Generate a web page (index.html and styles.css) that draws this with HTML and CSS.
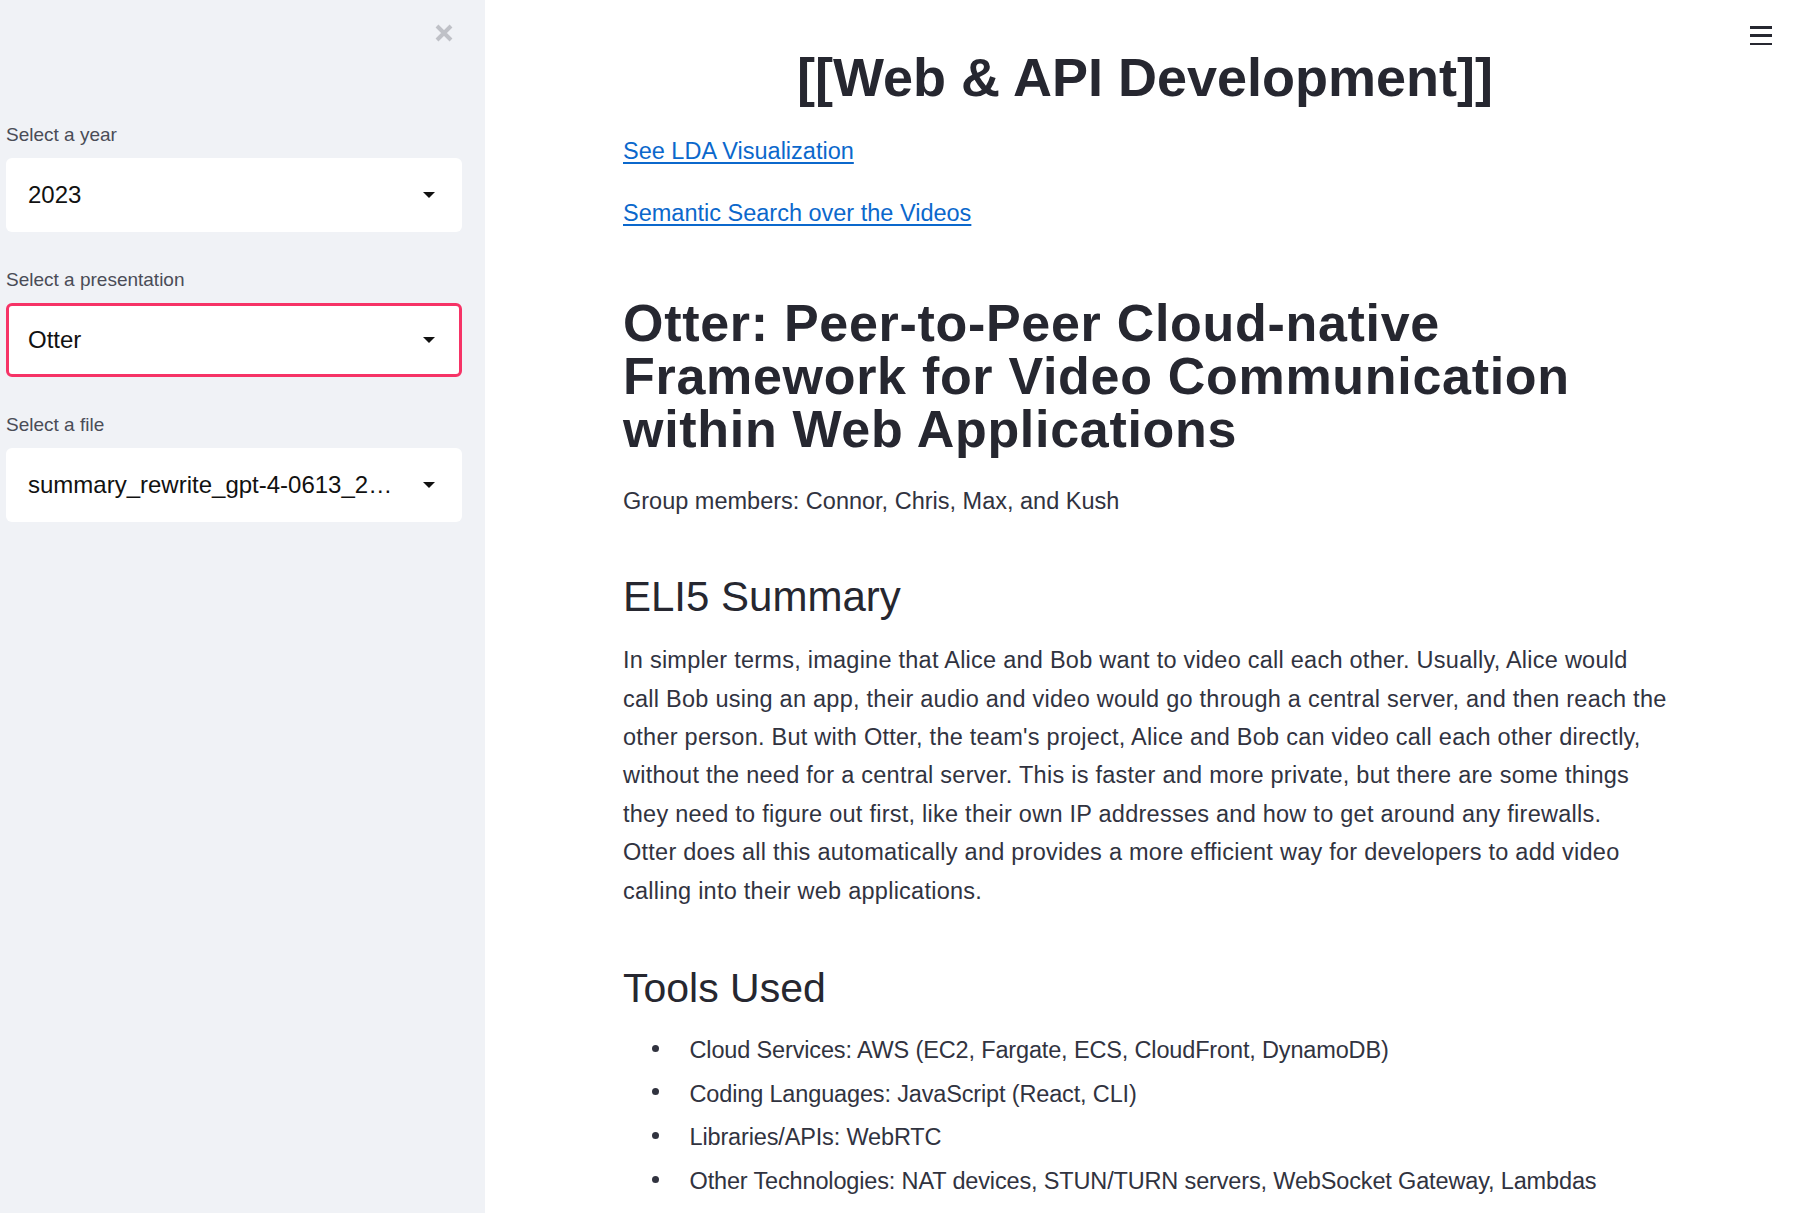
FILE: index.html
```html
<!DOCTYPE html>
<html lang="en">
<head>
<meta charset="utf-8">
<title>Web &amp; API Development</title>
<link rel="stylesheet" href="styles.css">
</head>
<body>
<aside class="sidebar">
  <div class="sidebar-head">
    <button class="close-btn" aria-label="Close sidebar">
      <svg width="20" height="20" viewBox="0 0 20 20"><path d="M3 3 L17 17 M17 3 L3 17" stroke="#bfc1c7" stroke-width="4" stroke-linecap="butt" fill="none"/></svg>
    </button>
  </div>
  <div class="field">
    <label class="field-label">Select a year</label>
    <div class="select">
      <span class="select-value">2023</span>
      <svg class="caret" width="12" height="6" viewBox="0 0 12 6"><path d="M0 0 H12 L6 6 Z" fill="#111"/></svg>
    </div>
  </div>
  <div class="field">
    <label class="field-label">Select a presentation</label>
    <div class="select focused">
      <span class="select-value">Otter</span>
      <svg class="caret" width="12" height="6" viewBox="0 0 12 6"><path d="M0 0 H12 L6 6 Z" fill="#111"/></svg>
    </div>
  </div>
  <div class="field">
    <label class="field-label">Select a file</label>
    <div class="select">
      <span class="select-value">summary_rewrite_gpt-4-0613_2023_otter.md</span>
      <svg class="caret" width="12" height="6" viewBox="0 0 12 6"><path d="M0 0 H12 L6 6 Z" fill="#111"/></svg>
    </div>
  </div>
</aside>
<main class="main">
  <button class="menu-btn" aria-label="Menu">
    <span></span><span></span><span></span>
  </button>
  <div class="content">
    <h1 class="page-title">[[Web &amp; API Development]]</h1>
    <p class="link-row"><a href="#">See LDA Visualization</a></p>
    <p class="link-row last"><a href="#">Semantic Search over the Videos</a></p>
    <h2 class="doc-title">Otter: Peer-to-Peer Cloud-native Framework for Video Communication within Web Applications</h2>
    <p class="members">Group members: Connor, Chris, Max, and Kush</p>
    <h3 class="section-title">ELI5 Summary</h3>
    <p class="body-text">In simpler terms, imagine that Alice and Bob want to video call each other. Usually, Alice would call Bob using an app, their audio and video would go through a central server, and then reach the other person. But with Otter, the team's project, Alice and Bob can video call each other directly, without the need for a central server. This is faster and more private, but there are some things they need to figure out first, like their own IP addresses and how to get around any firewalls.<br>Otter does all this automatically and provides a more efficient way for developers to add video calling into their web applications.</p>
    <h3 class="section-title tools">Tools Used</h3>
    <ul class="tool-list">
      <li>Cloud Services: AWS (EC2, Fargate, ECS, CloudFront, DynamoDB)</li>
      <li>Coding Languages: JavaScript (React, CLI)</li>
      <li>Libraries/APIs: WebRTC</li>
      <li>Other Technologies: NAT devices, STUN/TURN servers, WebSocket Gateway, Lambdas</li>
    </ul>
  </div>
</main>
</body>
</html>
```
FILE: styles.css
```css
* { box-sizing: border-box; }

html, body {
  margin: 0;
  padding: 0;
}

body {
  display: flex;
  width: 1802px;
  height: 1213px;
  overflow: hidden;
  background: #ffffff;
  font-family: "Liberation Sans", Arial, sans-serif;
  color: #31333f;
}

/* ---------- Sidebar ---------- */
.sidebar {
  width: 485px;
  flex: 0 0 485px;
  background: #f0f2f6;
  padding: 0 23px 0 6px;
}

.sidebar-head {
  height: 122px;
  display: flex;
  justify-content: flex-end;
  align-items: flex-start;
  padding-top: 23px;
  padding-right: 8px;
}

.close-btn {
  border: 0;
  background: transparent;
  padding: 0;
  width: 20px;
  height: 20px;
  display: block;
  cursor: pointer;
}

.close-btn svg { display: block; }

.field {
  display: flex;
  flex-direction: column;
  margin-bottom: 35px;
}

.field-label {
  font-size: 19px;
  line-height: 25px;
  height: 25px;
  color: #4a4c57;
  margin-bottom: 11px;
}

.select {
  height: 74px;
  background: #ffffff;
  border: 3px solid transparent;
  border-radius: 6px;
  display: flex;
  align-items: center;
  padding: 0 24px 0 19px;
}

.select.focused {
  border-color: #f63366;
}

.select-value {
  flex: 1;
  min-width: 0;
  font-size: 24px;
  color: #111111;
  white-space: nowrap;
  overflow: hidden;
  text-overflow: ellipsis;
  margin-right: 18px;
}

.caret {
  display: block;
  flex: 0 0 12px;
}

/* ---------- Main ---------- */
.main {
  flex: 1;
  position: relative;
  background: #ffffff;
}

.menu-btn {
  position: absolute;
  top: 26px;
  left: 1265px;
  width: 22px;
  height: 19px;
  padding: 0;
  border: 0;
  background: transparent;
  display: flex;
  flex-direction: column;
  justify-content: space-between;
}

.menu-btn span {
  display: block;
  width: 22px;
  height: 2.5px;
  background: #262730;
}

.content {
  width: 1184px;
  padding: 45px 0 0 138px;
}

.content > * {
  width: 1044px;
}

.page-title {
  margin: 0 0 21.5px;
  font-size: 54px;
  line-height: 65px;
  font-weight: 700;
  color: #262730;
  text-align: center;
}

.link-row {
  margin: 0 0 24px;
  font-size: 23.5px;
  line-height: 38.4px;
}

.link-row.last {
  margin-bottom: 64.5px;
}

.link-row a {
  color: #0b68cc;
  text-decoration: underline;
  text-underline-offset: 3px;
}

.doc-title {
  margin: 0 0 26px;
  font-size: 52px;
  line-height: 53px;
  letter-spacing: 0.7px;
  font-weight: 700;
  color: #262730;
}

.members {
  margin: 0 0 52px;
  font-size: 23.5px;
  line-height: 38.4px;
  color: #31333f;
}

.section-title {
  margin: 0 0 19px;
  font-size: 42px;
  line-height: 50px;
  font-weight: 400;
  color: #262730;
}

.section-title.tools {
  font-size: 41px;
  margin-bottom: 18px;
}

.body-text {
  margin: 0 0 53px;
  font-size: 23.5px;
  line-height: 38.4px;
  letter-spacing: 0.25px;
  color: #31333f;
}

.tool-list {
  list-style: none;
  margin: 0;
  padding: 0;
}

.tool-list li {
  font-size: 23.5px;
  line-height: 38.4px;
  letter-spacing: -0.15px;
  padding-left: 28.5px;
  margin-bottom: 5.3px;
  color: #31333f;
}

.tool-list li::before {
  content: "";
  display: inline-block;
  width: 7px;
  height: 7px;
  border-radius: 50%;
  background: #31333f;
  margin-right: 31px;
  margin-bottom: 6.5px;
}
```
